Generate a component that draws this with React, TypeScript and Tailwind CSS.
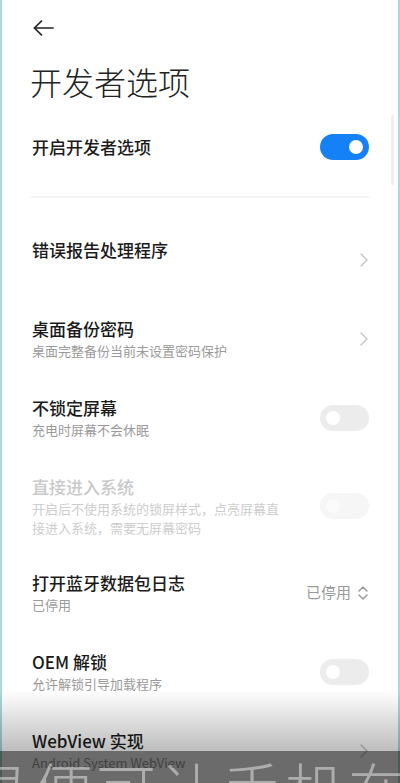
import React from "react";

const font = { fontFamily: '"Noto Sans CJK SC", "Noto Sans", sans-serif' };

function Chevron() {
  return (
    <svg width="10" height="16" viewBox="0 0 10 16" fill="none">
      <path d="M2 2 L8 8 L2 14" stroke="#c4c4c4" strokeWidth="1.4" strokeLinecap="round" strokeLinejoin="round" />
    </svg>
  );
}

function UpDown() {
  return (
    <svg width="12" height="18" viewBox="0 0 12 18" fill="none">
      <path d="M2 7 L6 3 L10 7" stroke="#9a9a9a" strokeWidth="1.5" strokeLinecap="round" strokeLinejoin="round" />
      <path d="M2 11 L6 15 L10 11" stroke="#9a9a9a" strokeWidth="1.5" strokeLinecap="round" strokeLinejoin="round" />
    </svg>
  );
}

function Toggle({ on, disabled }: { on?: boolean; disabled?: boolean }) {
  if (on) {
    return (
      <div className="w-[49px] h-[26px] rounded-full bg-[#1482f6] flex items-center justify-end pr-[6px] shrink-0">
        <div className="w-[14px] h-[14px] rounded-full bg-white" />
      </div>
    );
  }
  if (disabled) {
    return (
      <div className="w-[49px] h-[26px] rounded-full bg-[#f6f6f6] flex items-center pl-[6px] shrink-0">
        <div className="w-[14px] h-[14px] rounded-full bg-[#fbfbfb]" />
      </div>
    );
  }
  return (
    <div className="w-[49px] h-[26px] rounded-full bg-[#ececec] flex items-center pl-[6px] shrink-0">
      <div className="w-[14px] h-[14px] rounded-full bg-white" />
    </div>
  );
}

function Row({
  title,
  sub,
  right,
  disabled,
}: {
  title: string;
  sub?: string[];
  right?: React.ReactNode;
  disabled?: boolean;
}) {
  return (
    <div className={`flex items-center pt-[18px] ${disabled ? "pb-[16px]" : "pb-[18px]"} pl-[32px] pr-[31px]`}>
      <div className="flex-1 min-w-0">
        <div
          className={`text-[17px] leading-[24px] font-medium ${disabled ? "text-[#c9c9c9]" : "text-[#1b1b1b]"}`}
        >
          {title}
        </div>
        {sub && (
          <div className={`text-[13px] leading-[19px] ${disabled ? "text-[#cdcdcd]" : "text-[#9a9a9a]"}`}>
            {sub.map((s, i) => (
              <div key={i}>{s}</div>
            ))}
          </div>
        )}
      </div>
      <div className="shrink-0 flex items-center">{right}</div>
    </div>
  );
}

export default function App() {
  return (
    <div className="relative w-[400px] h-[783px] overflow-hidden bg-white" style={font}>
      <div className="absolute left-0 top-0 bottom-0 w-[2px] bg-[#a9d9d9]" />
      <div className="absolute right-0 top-0 bottom-0 w-[2px] bg-[#a9d9d9]" />
      <div className="absolute right-[6px] top-[115px] w-[3px] h-[70px] rounded-full bg-[#eeeeee]" />

      <div className="h-[56px] flex items-center pl-[33px]">
        <svg width="21" height="16" viewBox="0 0 21 16" fill="none">
          <path d="M1.5 8 H20" stroke="#222" strokeWidth="1.7" strokeLinecap="round" />
          <path d="M8.5 1 L1.5 8 L8.5 15" stroke="#222" strokeWidth="1.7" strokeLinecap="round" strokeLinejoin="round" />
        </svg>
      </div>

      <div className="h-[50px] leading-[50px] pl-[30px] text-[32px] font-light text-[#222]">开发者选项</div>

      <div className="h-[82px] flex items-center pl-[32px] pr-[31px]">
        <div className="flex-1 text-[17px] font-medium text-[#1b1b1b]">开启开发者选项</div>
        <Toggle on />
      </div>

      <div className="mt-[8px] mx-[31px] h-[2px] bg-[#f2f2f2]" />

      <div className="mt-[22px]">
        <Row title="错误报告处理程序" sub={["\u00a0"]} right={<Chevron />} />
        <Row title="桌面备份密码" sub={["桌面完整备份当前未设置密码保护"]} right={<Chevron />} />
        <Row title="不锁定屏幕" sub={["充电时屏幕不会休眠"]} right={<Toggle />} />
        <Row
          title="直接进入系统"
          sub={["开启后不使用系统的锁屏样式，点亮屏幕直", "接进入系统，需要无屏幕密码"]}
          right={<Toggle disabled />}
          disabled
        />
        <Row
          title="打开蓝牙数据包日志"
          sub={["已停用"]}
          right={
            <div className="flex items-center gap-[6px] text-[15px] text-[#9a9a9a]">
              <span>已停用</span>
              <UpDown />
            </div>
          }
        />
        <Row title="OEM 解锁" sub={["允许解锁引导加载程序"]} right={<Toggle />} />
        <Row title="WebView 实现" sub={["Android System WebView"]} right={<Chevron />} />
      </div>

      <div className="absolute left-0 right-0 top-[690px] h-[61px] bg-gradient-to-b from-[rgba(0,0,0,0)] to-[rgba(0,0,0,0.26)]" />
      <div className="absolute left-0 right-0 top-[751px] bottom-0 bg-[rgba(0,0,0,0.58)]" />
      <div
        className="absolute left-[-30px] top-[758px] whitespace-nowrap text-[60px] leading-[60px] tracking-[3px] font-light text-[rgba(255,255,255,0.45)]"
      >
        录便可让手机在
      </div>
    </div>
  );
}
